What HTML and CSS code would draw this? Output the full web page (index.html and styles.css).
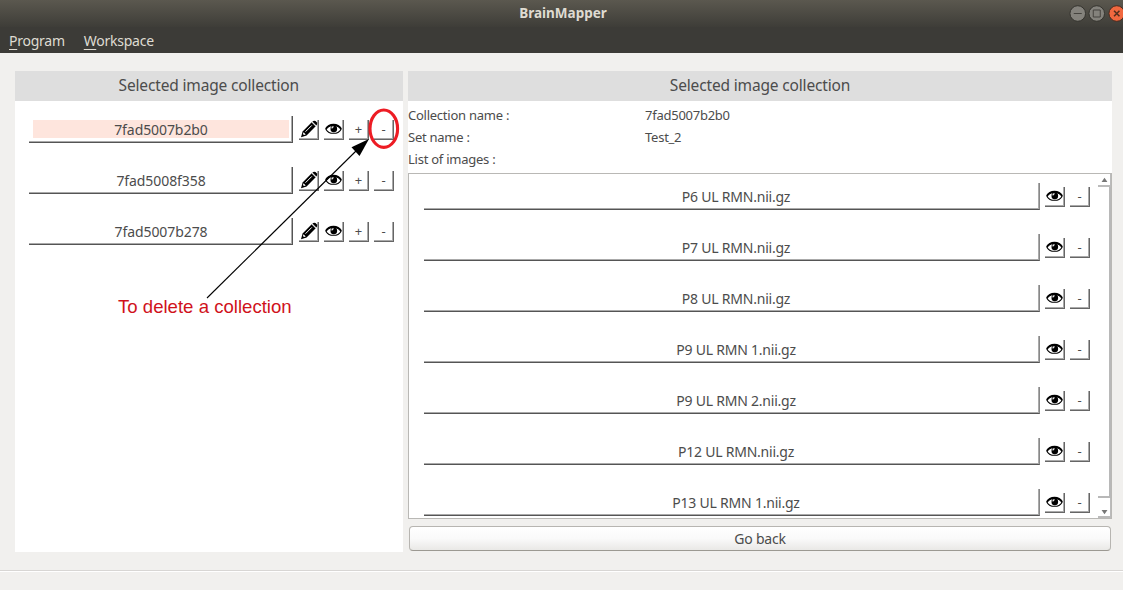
FILE: index.html
```html
<!DOCTYPE html>
<html lang="en">
<head>
<meta charset="utf-8">
<title>BrainMapper</title>
<link rel="stylesheet" href="styles.css">
</head>
<body>
<svg class="defs" aria-hidden="true">
  <symbol id="eye" viewBox="0 0 17 12">
    <path d="M1 6.4C4 1 13 1 16 6.4 13 11.600 4 11.600 1 6.400Z" fill="#fff" stroke="#000" stroke-width="1.100"/>
    <path d="M.8 6C4 .2 13 .2 16.200 6" fill="none" stroke="#000" stroke-width="1.700"/>
    <circle cx="8.800" cy="5.900" r="3.300"/>
    <path d="M6.800 5.400Q7 4 8.500 3.700" fill="none" stroke="#fff" stroke-width="1.200"/>
  </symbol>
  <symbol id="pencil" viewBox="0 0 18 18">
    <path d="M1 17.200 2.600 11.400 11.700 2.300 15.700 6.300 6.600 15.400Z"/>
    <path d="M12.400 1.600Q13.800.2 15.500 1L17 2.500Q17.800 4.200 16.400 5.600Z"/>
    <path d="M5.500 11.700 11.800 5.400" stroke="#fff" stroke-width="1"/>
    <path d="M11.600 2.300 15.700 6.400" stroke="#aaa" stroke-width=".5"/>
    <path d="M2.900 14 4 15.100 5.700 14.400 3.600 12.300Z" fill="#fff"/>
  </symbol>
</svg>
<div class="window">
  <header class="titlebar">
    <span class="title">BrainMapper</span>
    <div class="controls">
      <svg class="ctl" viewBox="0 0 17 17"><circle cx="8.5" cy="8.5" r="7.8" fill="#84827c" stroke="#35342f"/><path d="M4.5 8.5h8" stroke="#45433e"/></svg>
      <svg class="ctl" viewBox="0 0 17 17"><circle cx="8.5" cy="8.5" r="7.8" fill="#84827c" stroke="#35342f"/><path d="M5 5h7v7H5Z" fill="none" stroke="#45433e"/></svg>
      <svg class="ctl" viewBox="0 0 17 17"><circle cx="8.5" cy="8.5" r="7.8" fill="#f1683f" stroke="#4a2c20"/><path d="M5.8 5.8l5.4 5.4M11.2 5.8l-5.4 5.4" stroke="#55301f" stroke-width="1.6"/></svg>
    </div>
  </header>
  <nav class="menubar"><span><u>P</u>rogram</span><span><u>W</u>orkspace</span></nav>
  <main class="content">
    <section class="panel left">
      <h2 class="heading">Selected image collection</h2>
      <div class="rows">
        <div class="row"><button class="name selected"><span>7fad5007b2b0</span></button><button class="tool"><svg class="pencil"><use href="#pencil"/></svg></button><button class="tool"><svg class="eye"><use href="#eye"/></svg></button><button class="tool">+</button><button class="tool">-</button></div>
        <div class="row"><button class="name"><span>7fad5008f358</span></button><button class="tool"><svg class="pencil"><use href="#pencil"/></svg></button><button class="tool"><svg class="eye"><use href="#eye"/></svg></button><button class="tool">+</button><button class="tool">-</button></div>
        <div class="row"><button class="name"><span>7fad5007b278</span></button><button class="tool"><svg class="pencil"><use href="#pencil"/></svg></button><button class="tool"><svg class="eye"><use href="#eye"/></svg></button><button class="tool">+</button><button class="tool">-</button></div>
      </div>
    </section>
    <section class="right">
      <h2 class="heading">Selected image collection</h2>
      <dl class="info">
        <dt>Collection name :</dt><dd>7fad5007b2b0</dd>
        <dt>Set name :</dt><dd>Test_2</dd>
        <dt>List of images :</dt><dd></dd>
      </dl>
      <div class="list">
        <div class="images">
          <div class="row"><button class="name"><span>P6 UL RMN.nii.gz</span></button><button class="tool"><svg class="eye"><use href="#eye"/></svg></button><button class="tool">-</button></div>
          <div class="row"><button class="name"><span>P7 UL RMN.nii.gz</span></button><button class="tool"><svg class="eye"><use href="#eye"/></svg></button><button class="tool">-</button></div>
          <div class="row"><button class="name"><span>P8 UL RMN.nii.gz</span></button><button class="tool"><svg class="eye"><use href="#eye"/></svg></button><button class="tool">-</button></div>
          <div class="row"><button class="name"><span>P9 UL RMN 1.nii.gz</span></button><button class="tool"><svg class="eye"><use href="#eye"/></svg></button><button class="tool">-</button></div>
          <div class="row"><button class="name"><span>P9 UL RMN 2.nii.gz</span></button><button class="tool"><svg class="eye"><use href="#eye"/></svg></button><button class="tool">-</button></div>
          <div class="row"><button class="name"><span>P12 UL RMN.nii.gz</span></button><button class="tool"><svg class="eye"><use href="#eye"/></svg></button><button class="tool">-</button></div>
          <div class="row"><button class="name"><span>P13 UL RMN 1.nii.gz</span></button><button class="tool"><svg class="eye"><use href="#eye"/></svg></button><button class="tool">-</button></div>
        </div>
        <div class="scrollbar">
          <div class="step"><svg viewBox="0 0 6 5"><path d="M3 .5 5.5 4.3H.5Z"/></svg></div>
          <div class="thumb"></div>
          <div class="step"><svg viewBox="0 0 6 5"><path d="M3 4.5.5.7h5Z"/></svg></div>
        </div>
      </div>
      <button class="back">Go back</button>
    </section>
  </main>
  <footer class="status"></footer>
  <svg class="annotation" viewBox="0 0 1123 590">
    <path d="M207 298 356 151" stroke="#000" stroke-width="1.1"/>
    <path d="M369 139 351.500 147.300 359.500 156Z"/>
    <ellipse cx="383.800" cy="128.700" rx="13.800" ry="18.700" fill="none" stroke="#ed1c24" stroke-width="3.100"/>
  </svg>
  <p class="note">To delete a collection</p>
</div>
</body>
</html>
```
FILE: styles.css
```css
* { box-sizing: border-box; }
body { margin: 0; font-family: "Noto Sans", sans-serif; color: #4c4c4c; }
button { font: inherit; color: inherit; letter-spacing: inherit; margin: 0; padding: 0; background: none; }
.defs { display: none; }
.window { position: relative; width: 1123px; height: 590px; overflow: hidden; background: #f1f0ee; display: flex; flex-direction: column; }
.titlebar { height: 27px; flex: none; background: linear-gradient(#5b584f, #3e3d38); display: grid; grid-template-columns: 1fr auto 1fr; align-items: center; padding-left: 3px; }
.title { grid-column: 2; font-weight: 700; font-size: 13.500px; line-height: 24px; margin-bottom: 2px; color: #dfdbd2; }
.controls { display: flex; justify-content: flex-end; gap: 2px; margin-right: -2px; }
.ctl { width: 17.500px; height: 17px; }
.menubar { height: 26px; flex: none; background: #3c3b37; color: #dfdbd2; font-size: 14px; letter-spacing: -.25px; line-height: 27px; display: flex; gap: 19px; padding-left: 9px; }
.menubar u { text-underline-offset: 3px; text-decoration-thickness: 1px; }
.content { height: 518px; flex: none; display: flex; gap: 5px; padding: 18px 11px 0 14.500px; border-bottom: 1px solid #d8d6d4; }
.status { border-top: 1px solid #fff; }
.heading { margin: 0; height: 30px; background: #dedede; font-size: 15.500px; letter-spacing: -.16px; font-weight: 400; line-height: 29px; text-align: center; }
.panel { background: #fff; }
.left { width: 388.500px; height: 481px; }
.rows { padding: 15px 9px 0 14.500px; display: flex; flex-direction: column; gap: 24px; }
.row { display: flex; align-items: center; gap: 5px; height: 27px; }
.name { flex: 1; height: 27px; display: flex; padding: 4px 3px 3px 4px; border: 0 solid #555; border-width: 0 1px 1px 0; box-shadow: inset -1px -1px #aaa; font-size: 14px; letter-spacing: -.08px; }
.left .name { margin-right: 1px; }
.name span { flex: 1; line-height: 19px; height: 18px; }
.selected span { background: #fee5dd; }
.tool { width: 20px; height: 20px; display: flex; align-items: center; justify-content: center; border: 0 solid #666; border-width: 0 1px 1px 0; box-shadow: inset -1px -1px #aaa; font-size: 13px; line-height: 20px; }
.eye { width: 17px; height: 12px; flex: none; }
.pencil { width: 18px; height: 18px; flex: none; }
.right { width: 704px; }
.info { margin: 0; height: 72px; padding-top: 3px; background: #fff; display: grid; grid-template-columns: 237px 1fr; grid-template-rows: repeat(3, 22px); font-size: 13px; letter-spacing: -.25px; line-height: 23px; }
.info dd { margin: 0; }
.list { height: 346px; background: #fff; border: 1px solid #b9b8b5; display: flex; justify-content: space-between; }
.images { width: 681px; padding: 9px 0 0 15px; display: flex; flex-direction: column; gap: 24px; }
.list .name { border-right-color: #888; padding-left: 12px; letter-spacing: -.22px; }
.scrollbar { width: 13px; display: flex; flex-direction: column; }
.step { height: 13px; display: flex; align-items: center; justify-content: center; border: 0 solid #bbb; border-width: 0 1px 2px 0; }
.step svg { width: 7px; height: 6px; fill: #777; }
.thumb { height: 311px; border: 0 solid #b8b8b8; border-width: 0 2px 2px 0; }
.scrollbar .step:last-child { height: 20px; padding-top: 9px; }
.back { display: block; width: 702px; height: 25px; margin: 7px 1px 0; border: 1px solid #b7b5b1; border-bottom-color: #9c9992; border-radius: 4px; background: linear-gradient(#fff, #fafafa 50%, #e9e8e6); font-size: 14px; letter-spacing: -.2px; line-height: 22px; }
.annotation { position: absolute; inset: 0; width: 1123px; height: 590px; pointer-events: none; }
.note { position: absolute; left: 118px; top: 296px; margin: 0; font: 18.600px/22px "Liberation Sans", sans-serif; color: #d0121b; white-space: nowrap; }
```
